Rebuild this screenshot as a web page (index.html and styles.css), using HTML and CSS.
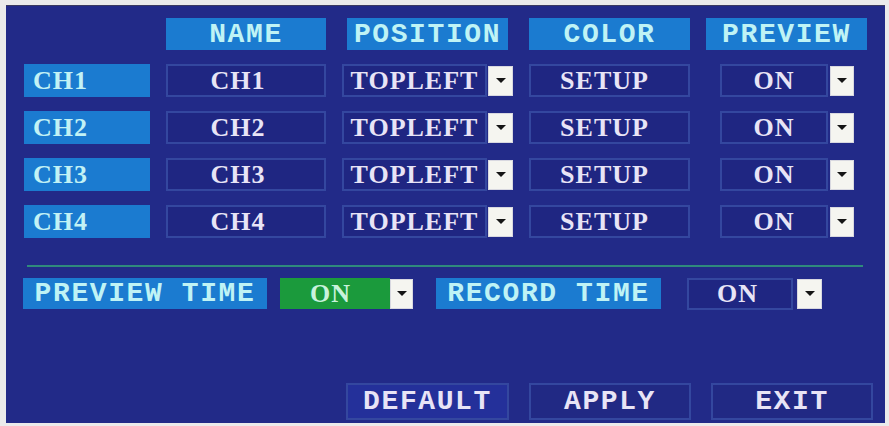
FILE: index.html
```html
<!DOCTYPE html>
<html>
<head>
<meta charset="utf-8">
<link rel="stylesheet" href="styles.css">
</head>
<body>
<div class="screen">
  <div class="panel">
    <div class="grid">
      <div class="blank"></div>
      <div class="hdr">NAME</div>
      <div class="hdr hdr-pos">POSITION</div>
      <div class="hdr">COLOR</div>
      <div class="hdr">PREVIEW</div>

      <div class="lbl">CH1</div>
      <div class="box name">CH1</div>
      <div class="sel pos"><div class="box">TOPLEFT</div><span class="dd"></span></div>
      <div class="box setup">SETUP</div>
      <div class="sel prev"><div class="box">ON</div><span class="dd"></span></div>

      <div class="lbl">CH2</div>
      <div class="box name">CH2</div>
      <div class="sel pos"><div class="box">TOPLEFT</div><span class="dd"></span></div>
      <div class="box setup">SETUP</div>
      <div class="sel prev"><div class="box">ON</div><span class="dd"></span></div>

      <div class="lbl">CH3</div>
      <div class="box name">CH3</div>
      <div class="sel pos"><div class="box">TOPLEFT</div><span class="dd"></span></div>
      <div class="box setup">SETUP</div>
      <div class="sel prev"><div class="box">ON</div><span class="dd"></span></div>

      <div class="lbl">CH4</div>
      <div class="box name">CH4</div>
      <div class="sel pos"><div class="box">TOPLEFT</div><span class="dd"></span></div>
      <div class="box setup">SETUP</div>
      <div class="sel prev"><div class="box">ON</div><span class="dd"></span></div>
    </div>

    <div class="rule"></div>

    <div class="timebar">
      <div class="tlabel tl-prev">PREVIEW TIME</div>
      <div class="green">ON</div><span class="dd dd-green"></span>
      <div class="tlabel tl-rec">RECORD TIME</div>
      <div class="box recbox">ON</div><span class="dd dd-rec"></span>
    </div>

    <div class="buttons">
      <div class="btn btn-default">DEFAULT</div>
      <div class="btn">APPLY</div>
      <div class="btn">EXIT</div>
    </div>
  </div>
</div>
</body>
</html>
```

FILE: styles.css
```css
* { box-sizing: border-box; }
html, body { margin: 0; padding: 0; }
body {
  background: #ebebeb;
  width: 889px;
  height: 426px;
  overflow: hidden;
}
.screen {
  padding: 5px 4px 3px 6px;
}
.panel {
  width: 879px;
  height: 418px;
  background: #222a88;
  padding: 11px 12px 0 18px;
  border-top: 1px solid #3a3a60;
}
.grid {
  display: grid;
  grid-template-columns: 126px 160px 171px 161px 161px;
  grid-template-rows: 33px repeat(4, 33px);
  column-gap: 16px;
  row-gap: 14px;
}
.hdr {
  align-self: end;
  height: 32px;
  background: #1b7bd0;
  color: #bff3f5;
  font-family: "Liberation Mono", "DejaVu Sans Mono", monospace;
  font-weight: bold;
  font-size: 28px;
  letter-spacing: 1.6px;
  display: flex;
  align-items: center;
  justify-content: center;
  margin-top: 1px;
}
.hdr-pos { margin: 0 5px; }
.lbl {
  background: #1b7bd0;
  color: #c2f2f5;
  font-family: "Liberation Serif", "DejaVu Serif", serif;
  font-weight: bold;
  font-size: 26px;
  display: flex;
  align-items: center;
  padding-left: 9px;
  letter-spacing: 1px;
}
.box {
  background: #1f2682;
  border: 2px solid #34479f;
  color: #e8e4f6;
  font-family: "Liberation Serif", "DejaVu Serif", serif;
  font-weight: bold;
  font-size: 26px;
  letter-spacing: 1px;
  display: flex;
  align-items: center;
  justify-content: center;
}
.name { padding-right: 16px; }
.setup { padding-right: 10px; }
.sel {
  display: flex;
  align-items: center;
}
.pos .box { flex: 1; height: 33px; margin-right: 1px; }
.pos .dd { width: 25px; height: 30px; }
.prev { padding-left: 14px; }
.prev .box { width: 108px; height: 33px; margin-right: 2px; }
.prev .dd { width: 24px; height: 30px; }
.dd {
  display: flex;
  align-items: center;
  justify-content: center;
  background: #f5f5f0;
  border: 1px solid #d8d8e0;
}
.dd::after {
  content: "";
  width: 0;
  height: 0;
  border-left: 5px solid transparent;
  border-right: 5px solid transparent;
  border-top: 5px solid #151515;
}
.rule {
  margin: 27px 0 0 3px;
  width: 836px;
  height: 2px;
  background: #2f8a7c;
}
.timebar {
  display: flex;
  align-items: center;
  margin-top: 11px;
  height: 31px;
}
.tlabel {
  height: 31px;
  background: #1b7bd0;
  color: #bff3f5;
  font-family: "Liberation Mono", "DejaVu Sans Mono", monospace;
  font-weight: bold;
  font-size: 28px;
  letter-spacing: 1.6px;
  display: flex;
  align-items: center;
  justify-content: center;
}
.tl-prev { margin-left: -1px; width: 244px; }
.green {
  margin-left: 13px;
  width: 110px;
  height: 31px;
  background: #1b9a3c;
  color: #c8f2dc;
  font-family: "Liberation Serif", "DejaVu Serif", serif;
  font-weight: bold;
  font-size: 26px;
  letter-spacing: 1px;
  display: flex;
  align-items: center;
  padding-left: 30px;
}
.dd-green { width: 23px; height: 30px; }
.tl-rec { margin-left: 23px; width: 225px; }
.recbox {
  margin-left: 26px;
  width: 106px;
  height: 32px;
  justify-content: flex-start;
  padding-left: 28px;
  margin-right: 4px;
}
.dd-rec { width: 25px; height: 30px; }
.buttons {
  display: flex;
  justify-content: flex-end;
  gap: 20px;
  margin-top: 74px;
}
.btn {
  width: 162px;
  height: 37px;
  border: 2px solid #34479f;
  background: #212984;
  color: #e8e4f6;
  font-family: "Liberation Mono", "DejaVu Sans Mono", monospace;
  font-weight: bold;
  font-size: 28px;
  letter-spacing: 1.6px;
  display: flex;
  align-items: center;
  justify-content: center;
}
.btn-default { background: #24309a; width: 163px; }
```
